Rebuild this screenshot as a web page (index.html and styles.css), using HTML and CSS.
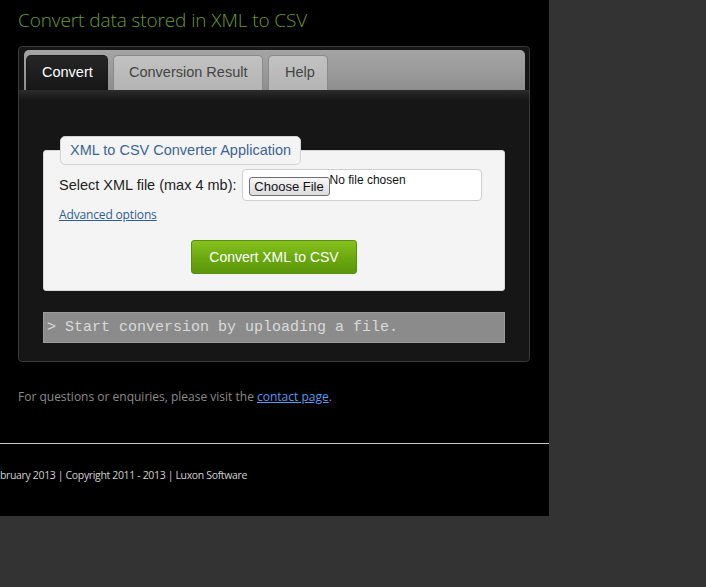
FILE: index.html
```html
<!DOCTYPE html>
<html>
<head>
<meta charset="utf-8">
<link rel="stylesheet" href="styles.css">
</head>
<body>
<div class="page">
  <h1 class="title">Convert data stored in XML to CSV</h1>
  <div class="panel">
    <div class="tabbar">
      <div class="tab active">Convert</div>
      <div class="tab">Conversion Result</div>
      <div class="tab">Help</div>
    </div>
    <div class="tabshade"></div>
    <div class="tabbody">
      <div class="group">
        <div class="legend">XML to CSV Converter Application</div>
        <div class="row">
          <span class="label">Select XML file (max 4 mb):</span>
          <div class="filebox">
            <span class="choose">Choose File</span><span class="nofile">No file chosen</span>
          </div>
        </div>
        <a class="adv" href="#">Advanced options</a>
        <div class="btnrow"><span class="gobtn">Convert XML to CSV</span></div>
      </div>
      <div class="console">&gt; Start conversion by uploading a file.</div>
    </div>
  </div>
  <p class="contact">For questions or enquiries, please visit the <a href="#">contact page</a>.</p>
  <div class="rule"></div>
  <div class="footer">bruary 2013 | Copyright 2011 - 2013 | Luxon Software</div>
</div>
</body>
</html>
```
FILE: styles.css
```css
html, body { margin: 0; padding: 0; }
body { background: #333333; font-family: "Liberation Sans", Arial, sans-serif; }
.page { width: 549px; height: 516px; background: #000; overflow: hidden; }
.title {
  margin: 0; padding: 7px 0 0 18px; height: 39px; box-sizing: border-box;
  font-family: "Open Sans", sans-serif; font-weight: 300; font-size: 19px;
  color: #6c9a2c; letter-spacing: -0.1px; line-height: 26px;
}
.panel {
  margin-left: 18px; width: 512px; height: 316px; box-sizing: border-box;
  margin-top: 7px;
  background: #161616; border: 1px solid #3a3a3a; border-radius: 4px;
  padding: 3px 4px 0 5px;
}
.tabbar {
  height: 40px; box-sizing: border-box;
  background: linear-gradient(#a4a4a4, #9a9a9a 55%, #8e8e8e);
  border-radius: 5px 5px 0 0; padding: 5px 0 0 2px;
  display: flex; gap: 5px; align-items: flex-end;
}
.tab {
  height: 35px; box-sizing: border-box; padding: 0 15px 2px;
  display: flex; align-items: center;
  font-size: 14.5px; color: #444;
  background: linear-gradient(#c2c2c2, #b4b4b4);
  border-radius: 5px 5px 0 0;
  border: 1px solid #8a8a8a; border-bottom: none;
}
.tab.active {
  color: #fff; background: linear-gradient(#262626, #161616);
  border-color: #1a1a1a; width: 82px; padding: 0 0 2px 15px;
}
.tab:nth-child(2) { width: 150px; padding: 0 0 2px 15px; }
.tab:nth-child(3) { width: 60px; padding: 0 0 2px 16px; }
.tabshade { height: 10px; margin: 0 -4px 0 -5px; background: linear-gradient(#2c2c2c, #161616); }
.tabbody { padding: 50px 20px 0 19px; }
.group {
  background: #f4f4f4; border: 1px solid #d8d8d8; border-radius: 3px;
  height: 141px; box-sizing: border-box; padding: 0 0 0 15px;
}
.legend {
  display: block; width: max-content; margin: -15px 0 0 1px; height: 29px; box-sizing: border-box;
  padding: 0 9px; background: #f4f4f4; border: 1px solid #d4d4d4; border-radius: 5px;
  font-size: 14.5px; color: #3e6591; line-height: 27px;
}
.row { display: flex; align-items: center; margin-top: 4px; gap: 5px; }
.label { font-size: 14.5px; color: #1e1e1e; }
.filebox {
  width: 240px; height: 32px; box-sizing: border-box; background: #fff;
  border: 1px solid #cfcfcf; border-radius: 4px; padding: 6px 0 0 6px;
  display: flex; align-items: flex-start;
}
.choose {
  width: 81px; height: 19px; box-sizing: border-box; font-size: 13px; color: #111;
  background: linear-gradient(#f6f6f6, #dcdcdc); border: 1px solid #707070; border-radius: 3px;
  text-align: center; line-height: 18px; margin-top: 1px;
}
.nofile { font-size: 12px; color: #111; margin-top: -3px; }
.adv {
  display: inline-block; margin-top: 5px; font-family: "Open Sans", sans-serif;
  font-size: 12px; color: #2d5e93; text-decoration: underline; letter-spacing: -0.15px;
}
.btnrow { display: flex; justify-content: center; margin-top: 17px; padding-right: 15px; }
.gobtn {
  width: 166px; height: 34px; box-sizing: border-box; border-radius: 3px;
  background: linear-gradient(#86c21e, #6aa80f 55%, #5c960a);
  border: 1px solid #5b8c12; color: #fff; font-size: 14px;
  display: flex; align-items: center; justify-content: center;
}
.console {
  margin-top: 21px; height: 31px; box-sizing: border-box; background: #8b8b8b;
  border: 1px solid #9c9c9c; font-family: "Liberation Mono", monospace; font-size: 15px;
  color: #dadada; padding: 4px 0 0 3px; line-height: 22px;
}
.contact {
  margin: 26px 0 0 18px; font-family: "Open Sans", sans-serif; font-size: 12px;
  color: #8a8a8a; letter-spacing: 0; line-height: 18px;
}
.contact a { color: #5a9af0; }
.rule { margin-top: 37px; width: 550px; height: 1px; background: #c8c8c8; }
.footer {
  margin-top: 24px; font-family: "Open Sans", sans-serif; font-size: 10.5px;
  color: #d0d0d0; letter-spacing: -0.35px; line-height: 15px;
}
```
